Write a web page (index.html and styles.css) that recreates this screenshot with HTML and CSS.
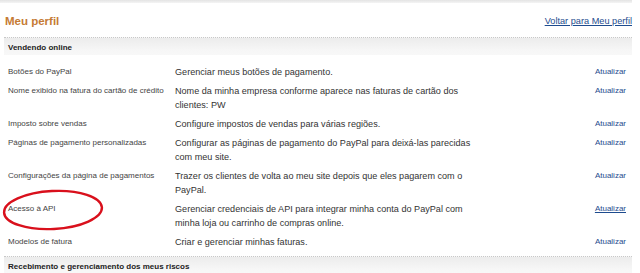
FILE: index.html
```html
<!DOCTYPE html>
<html lang="pt-BR">
<head>
<meta charset="utf-8">
<title>Meu perfil</title>
<link rel="stylesheet" href="styles.css">
</head>
<body>
<div class="topband"></div>
<div class="page">
  <div class="head">
    <h1 class="title">Meu perfil</h1>
    <a class="back" href="#">Voltar para Meu perfil</a>
  </div>

  <div class="section-bar">Vendendo online</div>
  <div class="rows">
    <div class="row">
      <div class="label">Botões do PayPal</div>
      <div class="desc">Gerenciar meus botões de pagamento.</div>
      <a class="act" href="#">Atualizar</a>
    </div>
    <div class="row">
      <div class="label">Nome exibido na fatura do cartão de crédito</div>
      <div class="desc">Nome da minha empresa conforme aparece nas faturas de cartão dos clientes: PW</div>
      <a class="act" href="#">Atualizar</a>
    </div>
    <div class="row">
      <div class="label">Imposto sobre vendas</div>
      <div class="desc">Configure impostos de vendas para várias regiões.</div>
      <a class="act" href="#">Atualizar</a>
    </div>
    <div class="row">
      <div class="label">Páginas de pagamento personalizadas</div>
      <div class="desc">Configurar as páginas de pagamento do PayPal para deixá-las parecidas com meu site.</div>
      <a class="act" href="#">Atualizar</a>
    </div>
    <div class="row">
      <div class="label">Configurações da página de pagamentos</div>
      <div class="desc">Trazer os clientes de volta ao meu site depois que eles pagarem com o PayPal.</div>
      <a class="act" href="#">Atualizar</a>
    </div>
    <div class="row highlight">
      <div class="label">Acesso à API</div>
      <div class="desc">Gerenciar credenciais de API para integrar minha conta do PayPal com minha loja ou carrinho de compras online.</div>
      <a class="act hover" href="#">Atualizar</a>
      <svg class="circle" width="108" height="50" viewBox="0 0 108 50" aria-hidden="true">
        <ellipse cx="52" cy="25" rx="49" ry="19" transform="rotate(-3 52 25)" fill="none" stroke="#d9101c" stroke-width="2.4"/>
      </svg>
    </div>
    <div class="row">
      <div class="label">Modelos de fatura</div>
      <div class="desc">Criar e gerenciar minhas faturas.</div>
      <a class="act" href="#">Atualizar</a>
    </div>
  </div>

  <div class="section-bar">Recebimento e gerenciamento dos meus riscos</div>
</div>
</body>
</html>
```

FILE: styles.css
```css
html, body {
  margin: 0;
  padding: 0;
  background: #ffffff;
}

body {
  font-family: "Liberation Sans", Arial, sans-serif;
  color: #333333;
  overflow: hidden;
}

.topband {
  width: 632px;
  height: 3px;
  background: linear-gradient(#e4e4e4, #f4f4f4);
}

.page {
  width: 628px;
  margin-left: 4px;
}

.head {
  display: flex;
  justify-content: space-between;
  align-items: flex-start;
  height: 34px;
}

.title {
  margin: 11px 0 0 1px;
  font-size: 11.5px;
  line-height: 14px;
  font-weight: bold;
  color: #c57b35;
}

.back {
  margin-top: 12px;
  font-size: 9.2px;
  line-height: 12px;
  color: #1e4b8e;
  text-decoration: underline;
}

.section-bar {
  height: 18px;
  box-sizing: border-box;
  padding: 4px 0 0 4px;
  border-top: 1px dotted #c8c8c8;
  background: linear-gradient(#ececec, #f6f6f6 70%, #f8f8f8);
  font-size: 8px;
  line-height: 11px;
  font-weight: bold;
  color: #222222;
}

.rows {
  padding: 7px 0 5px 0;
}

.row {
  position: relative;
  display: grid;
  grid-template-columns: 167px 304px 1fr;
  align-items: start;
  padding: 2.5px 6px 2.5px 4px;
}

.label {
  font-size: 8px;
  line-height: 14px;
  color: #444444;
}

.desc {
  font-size: 9.1px;
  line-height: 14px;
  color: #333333;
}

.act {
  justify-self: end;
  font-size: 8px;
  line-height: 14px;
  color: #1e4b8e;
  text-decoration: none;
}

.act.hover {
  text-decoration: underline;
}

.circle {
  position: absolute;
  left: -3px;
  top: -14px;
}
```
